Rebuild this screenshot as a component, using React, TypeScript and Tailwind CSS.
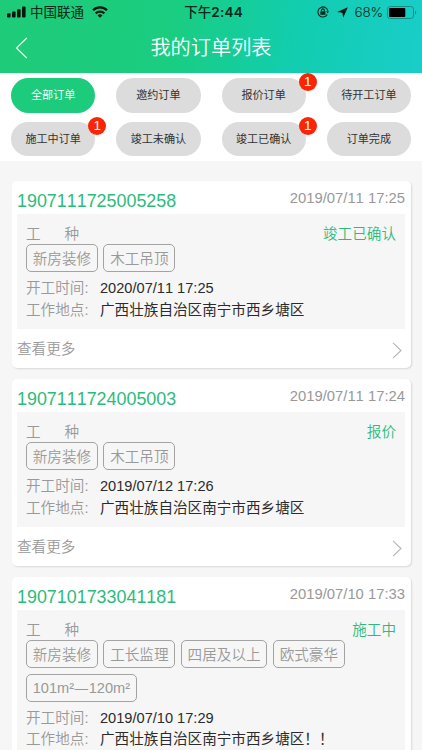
import React from "react";

type Order = {
  id: string;
  created: string;
  status: string;
  tags: string[];
  start: string;
  place: string;
};

const filters: { label: string; badge?: number; active?: boolean }[] = [
  { label: "全部订单", active: true },
  { label: "邀约订单" },
  { label: "报价订单", badge: 1 },
  { label: "待开工订单" },
  { label: "施工中订单", badge: 1 },
  { label: "竣工未确认" },
  { label: "竣工已确认", badge: 1 },
  { label: "订单完成" },
];

const orders: Order[] = [
  {
    id: "1907111725005258",
    created: "2019/07/11 17:25",
    status: "竣工已确认",
    tags: ["新房装修", "木工吊顶"],
    start: "2020/07/11 17:25",
    place: "广西壮族自治区南宁市西乡塘区",
  },
  {
    id: "1907111724005003",
    created: "2019/07/11 17:24",
    status: "报价",
    tags: ["新房装修", "木工吊顶"],
    start: "2019/07/12 17:26",
    place: "广西壮族自治区南宁市西乡塘区",
  },
  {
    id: "1907101733041181",
    created: "2019/07/10 17:33",
    status: "施工中",
    tags: ["新房装修", "工长监理", "四居及以上", "欧式豪华", "101m²—120m²"],
    start: "2019/07/10 17:29",
    place: "广西壮族自治区南宁市西乡塘区！！",
  },
];

function StatusBar() {
  return (
    <div className="grid h-6 grid-cols-[1fr_auto_1fr] items-center pr-[5px] pl-[7px] font-['Inter','Noto_Sans_CJK_SC',sans-serif] text-[13.5px] leading-6 font-[350] text-[#06281a]">
      <div className="flex items-center">
        <svg width="19" height="12" viewBox="0 0 19 12" fill="#04180f">
          <rect x="0" y="7.2" width="3.6" height="4.3" rx="1" />
          <rect x="5" y="5.4" width="3.6" height="6.1" rx="1" />
          <rect x="10" y="3.2" width="3.6" height="8.3" rx="1" />
          <rect x="15" y="0.5" width="3.6" height="11" rx="1" />
        </svg>
        <span className="ml-1 font-normal">中国联通</span>
        <svg className="ml-2" width="16" height="12" viewBox="0 0 16 12" fill="none" stroke="#04180f" strokeWidth="2.3">
          <path d="M1 4.3a10 10 0 0 1 14 0" />
          <path d="M3.7 7.4a6.2 6.2 0 0 1 8.6 0" />
          <path d="M8 11.8L5.5 9.4a3.4 3.4 0 0 1 5 0z" fill="#04180f" stroke="none" />
        </svg>
      </div>
      <div className="pl-[3px] font-medium tracking-[0.1px]">
        下午<span className="font-semibold tracking-[0.2px]">2:44</span>
      </div>
      <div className="flex items-center justify-end">
        <svg width="12" height="12" viewBox="0 0 12 12" fill="none" stroke="currentColor" strokeWidth="1.1">
          <path d="M10.2 8.6A5 5 0 1 1 10.9 5.2" />
          <path d="M9 5.2h3L10.6 7.6z" fill="currentColor" stroke="none" />
          <rect x="3.4" y="5.3" width="5" height="3.5" fill="currentColor" stroke="none" />
          <path d="M4.5 5.5V4.3a1.4 1.4 0 0 1 2.8 0v1.2" />
        </svg>
        <svg className="ml-[8px]" width="11" height="11" viewBox="0 0 11 11" fill="#04180f">
          <path d="M10.8 0.2L6.2 10.8 5.4 5.7 0.2 4.9z" />
        </svg>
        <span className="ml-[7px] tracking-[-0.2px]">68%</span>
        <svg className="ml-1" width="30" height="13" viewBox="0 0 30 13">
          <rect x="0.5" y="0.5" width="26" height="12" rx="2.8" fill="none" stroke="#128a7c" strokeWidth="0.9" />
          <rect x="2" y="2" width="16.3" height="9" rx="1" fill="#000" />
          <path d="M28 4.5a2.3 2.3 0 0 1 0 4z" fill="#128a7c" />
        </svg>
      </div>
    </div>
  );
}

function Field({ label, value }: { label: string; value: string }) {
  return (
    <div className="flex h-[21.5px] items-center leading-5">
      <span className="w-[74px] text-[#999]">{label}</span>
      <span className="font-normal text-[#2b2b2b]">{value}</span>
    </div>
  );
}

function Tag({ text }: { text: string }) {
  const [from, to] = text.split("—");
  return (
    <span className="flex h-[28px] items-center rounded-[5px] border border-[#a3a3a3] px-[5.7px] pt-px text-[#999]">
      {from}
      {to && (
        <>
          <span className="pb-[2px] font-['Noto_Sans',sans-serif]">—</span>
          {to}
        </>
      )}
    </span>
  );
}

function OrderCard({ order }: { order: Order }) {
  return (
    <article className="rounded-[5px] bg-white px-[5.5px] shadow-[1px_1px_2px_rgba(0,0,0,0.12)]">
      <div className="flex h-[33px] justify-between">
        <h2 className="pt-[6px] text-[17.9px] leading-7 text-[#2dbb7b]">{order.id}</h2>
        <time className="pt-[6px] text-[14.8px] leading-[22px] text-[#999]">{order.created}</time>
      </div>
      <div className="bg-[#f6f6f6] px-[9px] pt-[8.5px] pb-[8.5px]">
        <div className="flex h-[21.5px] items-center justify-between pt-px">
          <div className="flex gap-[24px] text-[#999]">
            <span>工</span>
            <span>种</span>
          </div>
          <span className="text-[#2dbb7b]">{order.status}</span>
        </div>
        <div className="flex flex-wrap gap-x-[5.7px] gap-y-[5.5px]">
          {order.tags.map((tag) => (
            <Tag key={tag} text={tag} />
          ))}
        </div>
        <div className="mt-[5.5px]">
          <Field label="开工时间:" value={order.start} />
          <Field label="工作地点:" value={order.place} />
        </div>
      </div>
      <button className="flex h-[38.5px] w-full items-center justify-between text-[#999]">
        <span className="pt-px">查看更多</span>
        <svg className="mt-[4px] mr-[3px]" width="10" height="17" viewBox="0 0 10 17" fill="none" stroke="#b5b5b5" strokeWidth="1.1">
          <path d="M1 0.8L9 8.5 1 16.2" />
        </svg>
      </button>
    </article>
  );
}

export default function App() {
  return (
    <div className="h-[750px] w-full overflow-hidden bg-[#f6f6f6] font-['Liberation_Sans','Noto_Sans_CJK_SC',sans-serif] text-[14.6px] leading-[22px] font-[350] [font-kerning:none]">
      <header className="h-[73px] bg-[linear-gradient(100deg,#1fcb78_0%,#1acd80_40%,#12cdb0_70%,#1acdca_100%)]">
        <StatusBar />
        <div className="grid h-[48px] grid-cols-[1fr_auto_1fr] items-center">
          <svg className="ml-[15px]" width="13" height="22" viewBox="0 0 13 22" fill="none" stroke="#e4fff1" strokeWidth="1.2">
            <path d="M11.8 1L1.5 11l10.3 10" />
          </svg>
          <h1 className="text-[20.2px] leading-7 text-white">我的订单列表</h1>
        </div>
      </header>
      <nav className="grid h-[88px] grid-cols-4 gap-x-[21px] gap-y-[9px] bg-white px-[11px] pt-[5px] pb-[5px]">
        {filters.map((f) => (
          <button
            key={f.label}
            className={`relative flex items-center justify-center rounded-full text-[11.1px] ${
              f.active ? "bg-[#1dcb7c] font-[350] text-white" : "bg-[#dcdcdc] font-normal text-[#333]"
            }`}
          >
            {f.label}
            {f.badge && (
              <span className="absolute -top-[5px] -right-[11px] flex size-[18px] items-center justify-center rounded-full bg-[#fa2406] text-[13.5px] text-white">
                {f.badge}
              </span>
            )}
          </button>
        ))}
      </nav>
      <main className="flex flex-col gap-[11.5px] px-[11.5px] pt-[20px]">
        {orders.map((o) => (
          <OrderCard key={o.id} order={o} />
        ))}
      </main>
    </div>
  );
}
